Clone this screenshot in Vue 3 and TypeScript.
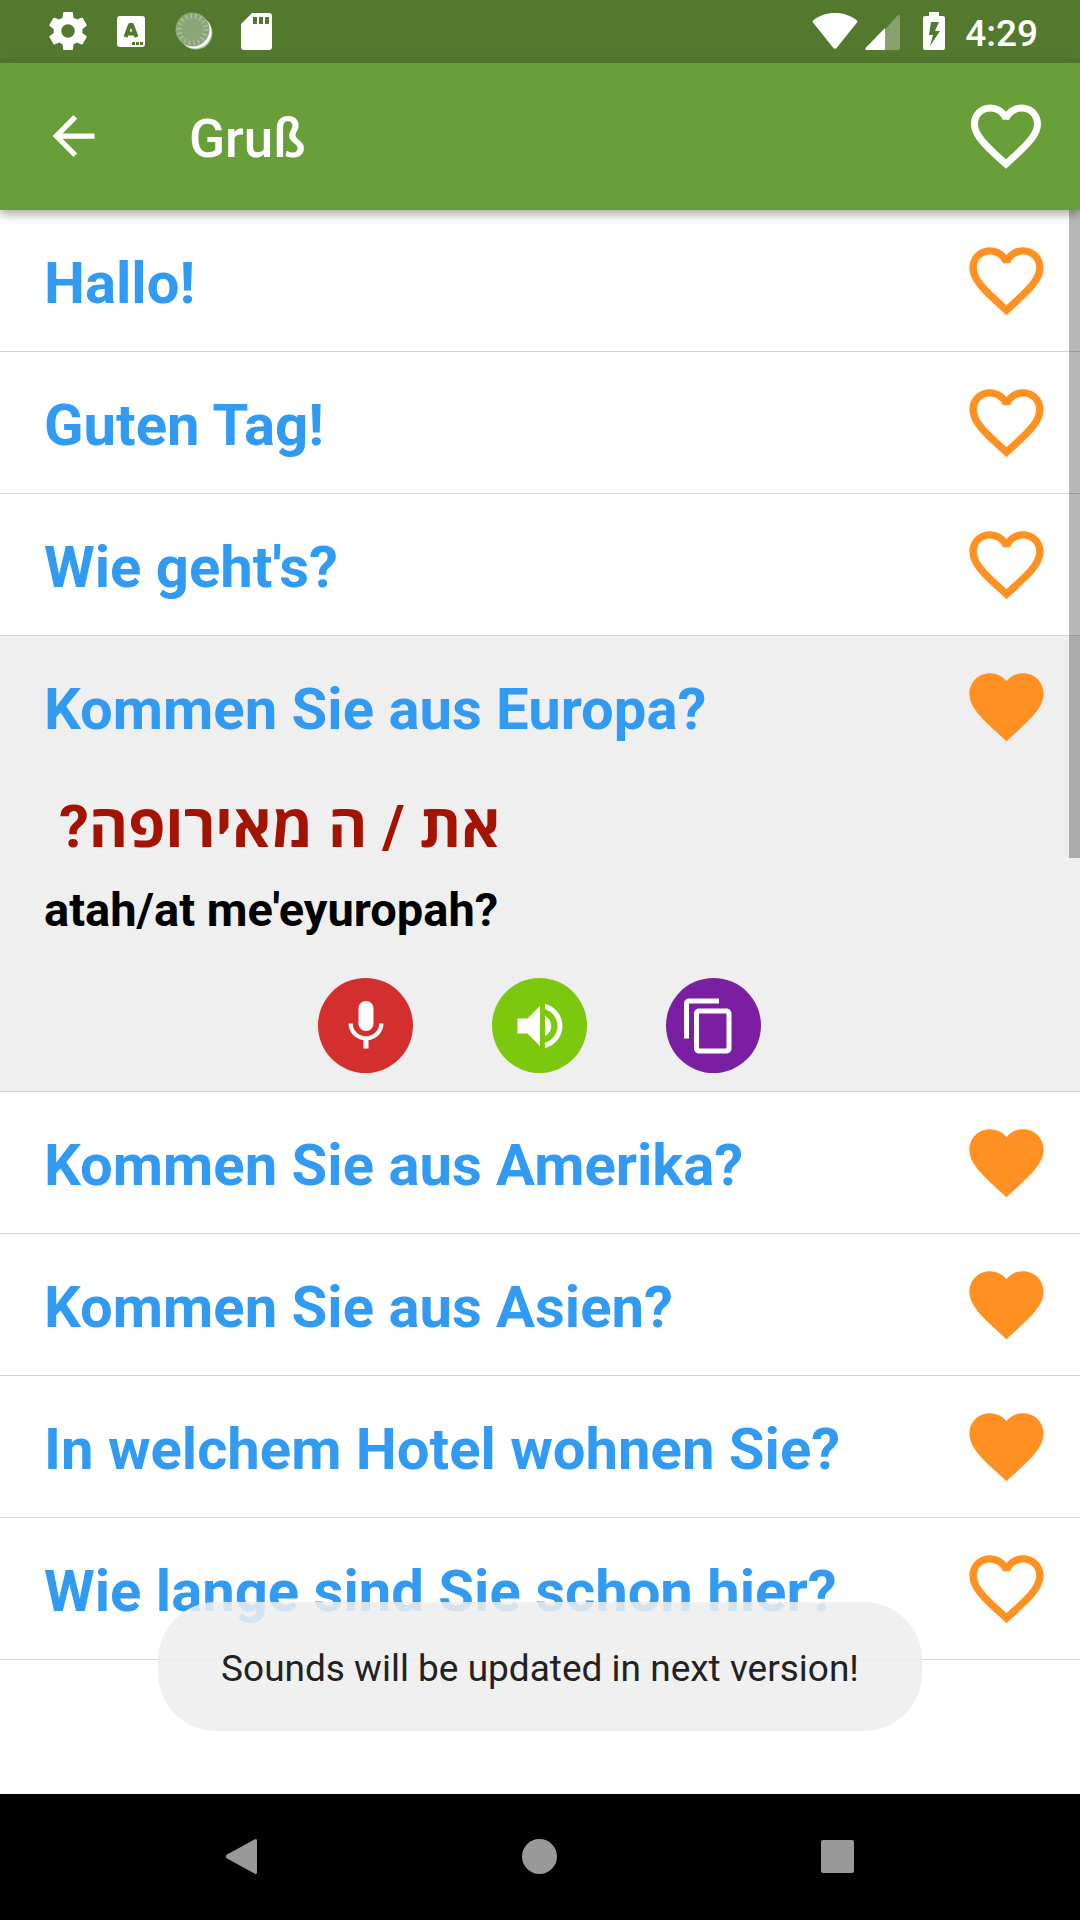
<script setup lang="ts">
import { ref } from 'vue'

interface Phrase {
  text: string
  favorite: boolean
  translation?: string
  transliteration?: string
}

const phrases = ref<Phrase[]>([
  { text: 'Hallo!', favorite: false },
  { text: 'Guten Tag!', favorite: false },
  { text: "Wie geht's?", favorite: false },
  {
    text: 'Kommen Sie aus Europa?',
    favorite: true,
    translation: 'את / ה מאירופה? ',
    transliteration: "atah/at me'eyuropah?",
  },
  { text: 'Kommen Sie aus Amerika?', favorite: true },
  { text: 'Kommen Sie aus Asien?', favorite: true },
  { text: 'In welchem Hotel wohnen Sie?', favorite: true },
  { text: 'Wie lange sind Sie schon hier?', favorite: false },
])

const heartFull =
  'M12 21.35l-1.45-1.32C5.4 15.36 2 12.28 2 8.5 2 5.42 4.42 3 7.5 3c1.74 0 3.41.81 4.5 2.09C13.09 3.81 14.76 3 16.5 3 19.58 3 22 5.42 22 8.5c0 3.78-3.4 6.86-8.55 11.54L12 21.35z'
const heartOutline =
  'M16.5 3c-1.74 0-3.41.81-4.5 2.09C10.91 3.81 9.24 3 7.5 3 4.42 3 2 5.42 2 8.5c0 3.78 3.4 6.86 8.55 11.54L12 21.35l1.45-1.32C18.6 15.36 22 12.28 22 8.5 22 5.42 19.58 3 16.5 3zm-4.4 15.55l-.1.1-.1-.1C7.14 14.24 4 11.39 4 8.5 4 6.5 5.5 5 7.5 5c1.54 0 3.04.99 3.57 2.36h1.87C13.46 5.99 14.96 5 16.5 5c2 0 3.5 1.5 3.5 3.5 0 2.89-3.14 5.74-7.9 10.05z'
</script>

<template>
  <div class="screen">
    <div class="status-bar">
      <div class="status-left">
        <svg class="status-icon" viewBox="0 0 38 38" aria-hidden="true">
          <path
            fill="#fff"
            transform="translate(-4 -4) scale(1.92)"
            d="M19.43 12.98c.04-.32.07-.64.07-.98s-.03-.66-.07-.98l2.11-1.65c.19-.15.24-.42.12-.64l-2-3.46c-.12-.22-.39-.3-.61-.22l-2.49 1c-.52-.4-1.08-.73-1.69-.98l-.38-2.65C14.46 2.18 14.25 2 14 2h-4c-.25 0-.46.18-.49.42l-.38 2.65c-.61.25-1.17.59-1.69.98l-2.49-1c-.23-.09-.49 0-.61.22l-2 3.46c-.13.22-.07.49.12.64l2.11 1.65c-.04.32-.07.65-.07.98s.03.66.07.98l-2.11 1.65c-.19.15-.24.42-.12.64l2 3.46c.12.22.39.3.61.22l2.49-1c.52.4 1.08.73 1.69.98l.38 2.65c.03.24.24.42.49.42h4c.25 0 .46-.18.49-.42l.38-2.65c.61-.25 1.17-.59 1.69-.98l2.49 1c.23.09.49 0 .61-.22l2-3.46c.12-.22.07-.49-.12-.64l-2.11-1.65zM12 15.5c-1.93 0-3.5-1.57-3.5-3.5s1.57-3.5 3.5-3.5 3.5 1.57 3.5 3.5-1.57 3.5-3.5 3.5z"
          />
        </svg>
        <svg class="status-icon" viewBox="0 0 38 38" aria-hidden="true">
          <rect x="5" y="4" width="28" height="31" rx="3" fill="#fff" />
          <path d="M13.500 25 L18 13 H20 L24.500 25 M15.500 21.500 H22.500" fill="none" stroke="#52792d" stroke-width="4" stroke-linejoin="round" />
          <path d="M20 30h3v3h-3zM24 30h3v3h-3zM28 30h3v3h-3z" fill="#52792d" />
        </svg>
        <svg class="status-icon" viewBox="0 0 38 38" aria-hidden="true">
          <circle cx="21" cy="21" r="16.500" fill="#fff" opacity=".5" />
          <circle cx="20" cy="20" r="16.500" fill="#fff" />
          <circle cx="17.500" cy="17.500" r="17" fill="#8ca777" />
          <circle cx="17.500" cy="17.500" r="13.500" fill="none" stroke="#b4c5a6" stroke-width="5" stroke-dasharray="1.200 3.512" />
        </svg>
        <svg class="status-icon" viewBox="0 0 38 38" aria-hidden="true">
          <path fill="#fff" fill-rule="evenodd" d="M14 1H31a3 3 0 0 1 3 3V35a3 3 0 0 1-3 3H6a3 3 0 0 1-3-3V12zM15 5v7h4V5zM21 5v7h4V5zM27 5v7h4V5z" />
        </svg>
      </div>
      <div class="status-right">
        <svg class="wifi" viewBox="0 0 46 38" aria-hidden="true">
          <path fill="#fff" d="M1 8.500C7 3.500 14.500 1 23 1S39 3.500 45 8.500Q46 9.500 45 10.500L25 35.500Q23 38 21 35.500L1 10.500Q0 9.500 1 8.500z" />
        </svg>
        <svg class="signal" viewBox="0 0 35 38" aria-hidden="true">
          <path fill="#fff" opacity=".3" d="M20 17.500 L32 4Q35 1.500 35 5V36Q35 38 33 38H20z" />
          <path fill="#fff" d="M20 16V38H2Q-1 38 1 35.500z" />
        </svg>
        <svg class="battery" viewBox="0 0 22 38" aria-hidden="true">
          <path fill="#fff" fill-rule="evenodd" d="M6 0H16V4H20Q22 4 22 6V36Q22 38 20 38H2Q0 38 0 36V6Q0 4 2 4H6zM8 10L6 23H10L7 34L17 19H12L16 10z" />
        </svg>
        <time class="clock">4:29</time>
      </div>
    </div>

    <header class="app-bar">
      <button class="icon-button" type="button" aria-label="Zurück">
        <svg class="back-icon" viewBox="0 0 24 24"><path fill="#fff" d="M20 11H7.830l5.590-5.590L12 4l-8 8 8 8 1.410-1.410L7.830 13H20v-2z" /></svg>
      </button>
      <h1 class="title">Gruß</h1>
      <button class="icon-button" type="button" aria-label="Favoriten">
        <svg class="bar-heart" viewBox="0 0 24 24"><path fill="#fff" :d="heartOutline" /></svg>
      </button>
    </header>

    <main class="content">
      <ul class="phrases">
        <li v-for="phrase in phrases" :key="phrase.text" class="phrase" :class="{ open: phrase.translation }">
          <div class="phrase-row">
            <h2 class="phrase-text">{{ phrase.text }}</h2>
            <button
              class="icon-button"
              type="button"
              aria-label="Favorit"
              :aria-pressed="phrase.favorite"
              @click="phrase.favorite = !phrase.favorite"
            >
              <svg class="row-heart" viewBox="0 0 24 24">
                <path fill="#ff9122" :d="phrase.favorite ? heartFull : heartOutline" />
              </svg>
            </button>
          </div>
          <div v-if="phrase.translation" class="details">
            <p class="translation"><bdo dir="rtl" lang="he" class="hebrew">{{ phrase.translation }}</bdo></p>
            <p class="transliteration">{{ phrase.transliteration }}</p>
            <div class="actions">
              <button class="action record" type="button" aria-label="Aufnehmen">
                <svg class="action-icon" viewBox="0 0 24 24">
                  <path fill="#fff" d="M12 14c1.660 0 2.990-1.340 2.990-3L15 5c0-1.660-1.340-3-3-3S9 3.340 9 5v6c0 1.660 1.340 3 3 3zm5.300-3c0 3-2.540 5.100-5.300 5.100S6.700 14 6.700 11H5c0 3.410 2.720 6.230 6 6.720V21h2v-3.280c3.280-.48 6-3.300 6-6.720h-1.700z" />
                </svg>
              </button>
              <button class="action speak" type="button" aria-label="Anhören">
                <svg class="action-icon" viewBox="0 0 24 24">
                  <path fill="#fff" d="M3 9v6h4l5 5V4L7 9H3zm13.500 3c0-1.770-1.020-3.290-2.500-4.030v8.050c1.480-.73 2.500-2.250 2.500-4.020zM14 3.230v2.060c2.890.86 5 3.540 5 6.710s-2.110 5.850-5 6.710v2.060c4.010-.91 7-4.490 7-8.770s-2.990-7.860-7-8.770z" />
                </svg>
              </button>
              <button class="action copy" type="button" aria-label="Kopieren">
                <svg class="action-icon" viewBox="2 0 24 24">
                  <path fill="#fff" d="M16 1H4c-1.100 0-2 .9-2 2v14h2V3h12V1zm3 4H8c-1.100 0-2 .9-2 2v14c0 1.100.9 2 2 2h11c1.100 0 2-.9 2-2V7c0-1.100-.9-2-2-2zm0 16H8V7h11v14z" />
                </svg>
              </button>
            </div>
          </div>
        </li>
      </ul>
      <div class="scrollbar"></div>
      <div class="toast" role="status">Sounds will be updated in next version!</div>
    </main>

    <nav class="nav-bar">
      <button class="icon-button" type="button" aria-label="Back">
        <svg class="nav-icon" viewBox="0 0 48 48"><path fill="#999" d="M36.500 6.500Q39 5 39 8V39Q39 42 36.500 40.500L9 25.500Q6.500 23.500 9 21.500z" /></svg>
      </button>
      <button class="icon-button" type="button" aria-label="Home">
        <svg class="nav-icon" viewBox="0 0 48 48"><circle cx="23.500" cy="23.500" r="17.500" fill="#999" /></svg>
      </button>
      <button class="icon-button" type="button" aria-label="Overview">
        <svg class="nav-icon" viewBox="0 0 48 48"><rect x="7" y="7" width="33" height="33" rx="2" fill="#999" /></svg>
      </button>
    </nav>
  </div>
</template>

<style>
body {
  margin: 0;
}
</style>

<style scoped>
.screen {
  display: flex;
  flex-direction: column;
  min-height: 100vh;
  background: #fff;
  font-family: Roboto, 'Open Sans', 'Noto Sans', sans-serif;
}
svg {
  display: block;
  flex: none;
}
.icon-button {
  flex: none;
  padding: 0;
  border: 0;
  background: none;
}
.status-bar {
  display: flex;
  justify-content: space-between;
  align-items: flex-start;
  height: 51px;
  padding: 12px 42px 0 49px;
  background: #52792d;
}
.status-left {
  display: flex;
  gap: 25px;
}
.status-icon {
  width: 38px;
  height: 38px;
}
.status-right {
  display: flex;
  align-items: flex-start;
}
.wifi {
  width: 46px;
  height: 38px;
  margin-right: 7px;
}
.signal {
  width: 35px;
  height: 38px;
  margin-right: 23px;
}
.battery {
  width: 22px;
  height: 38px;
  margin-right: 20px;
}
.clock {
  color: #fff;
  font-size: 37px;
  line-height: 44px;
  font-weight: 500;
}
.app-bar {
  display: flex;
  align-items: flex-start;
  height: 116px;
  padding: 31px 32px 0 42px;
  background: #689f38;
  box-shadow: 0 4px 10px rgba(0, 0, 0, 0.35);
  position: relative;
  z-index: 2;
}
.back-icon {
  width: 63px;
  height: 84px;
}
.title {
  flex: 1;
  margin: 0 0 0 84px;
  color: #fff;
  font-size: 53px;
  line-height: 90px;
  font-weight: 500;
}
.bar-heart {
  width: 84px;
  height: 84px;
}
.content {
  position: relative;
  flex: 1;
}
.phrases {
  margin: 0;
  padding: 0;
  list-style: none;
}
.phrase {
  border-bottom: 1px solid #d6d6d6;
}
.phrase.open {
  background: #efefef;
}
.phrase-row {
  display: flex;
  align-items: flex-start;
  justify-content: space-between;
  height: 115px;
  padding: 26px 29px 0 44px;
}
.phrase-text {
  margin: 0;
  color: #319af3;
  font-size: 58px;
  line-height: 94px;
  font-weight: 700;
}
.row-heart {
  width: 89px;
  height: 89px;
}
.details {
  padding: 10px 45px 18px 44px;
}
.translation,
.transliteration {
  margin: 0;
  font-weight: 700;
}
.translation {
  color: #a31300;
  font-size: 60px;
  line-height: 80px;
}
.hebrew {
  display: inline-block;
  white-space: pre;
  unicode-bidi: isolate;
}
.transliteration {
  margin-top: 11px;
  color: #000;
  font-size: 47px;
  line-height: 64px;
}
.actions {
  display: flex;
  justify-content: center;
  gap: 79px;
  margin-top: 36px;
}
.action {
  display: flex;
  align-items: center;
  justify-content: center;
  width: 95px;
  height: 95px;
  padding: 0;
  border: 0;
  border-radius: 50%;
}
.record {
  background: #d32f2f;
}
.speak {
  background: #7bc80e;
}
.copy {
  background: #7b1fa2;
}
.action-icon {
  width: 60px;
  height: 60px;
}
.scrollbar {
  position: absolute;
  top: 0;
  right: 0;
  width: 11px;
  height: 648px;
  background: rgba(0, 0, 0, 0.28);
}
.toast {
  position: absolute;
  bottom: 63px;
  left: 50%;
  transform: translateX(-50%);
  padding: 45px 63px 40px;
  border-radius: 58px;
  background: rgba(238, 238, 238, 0.87);
  color: #222;
  font-size: 37px;
  line-height: 44px;
  white-space: nowrap;
}
.nav-bar {
  display: flex;
  align-items: center;
  justify-content: center;
  gap: 250px;
  height: 126px;
  background: #000;
}
.nav-icon {
  width: 48px;
  height: 48px;
}
</style>
